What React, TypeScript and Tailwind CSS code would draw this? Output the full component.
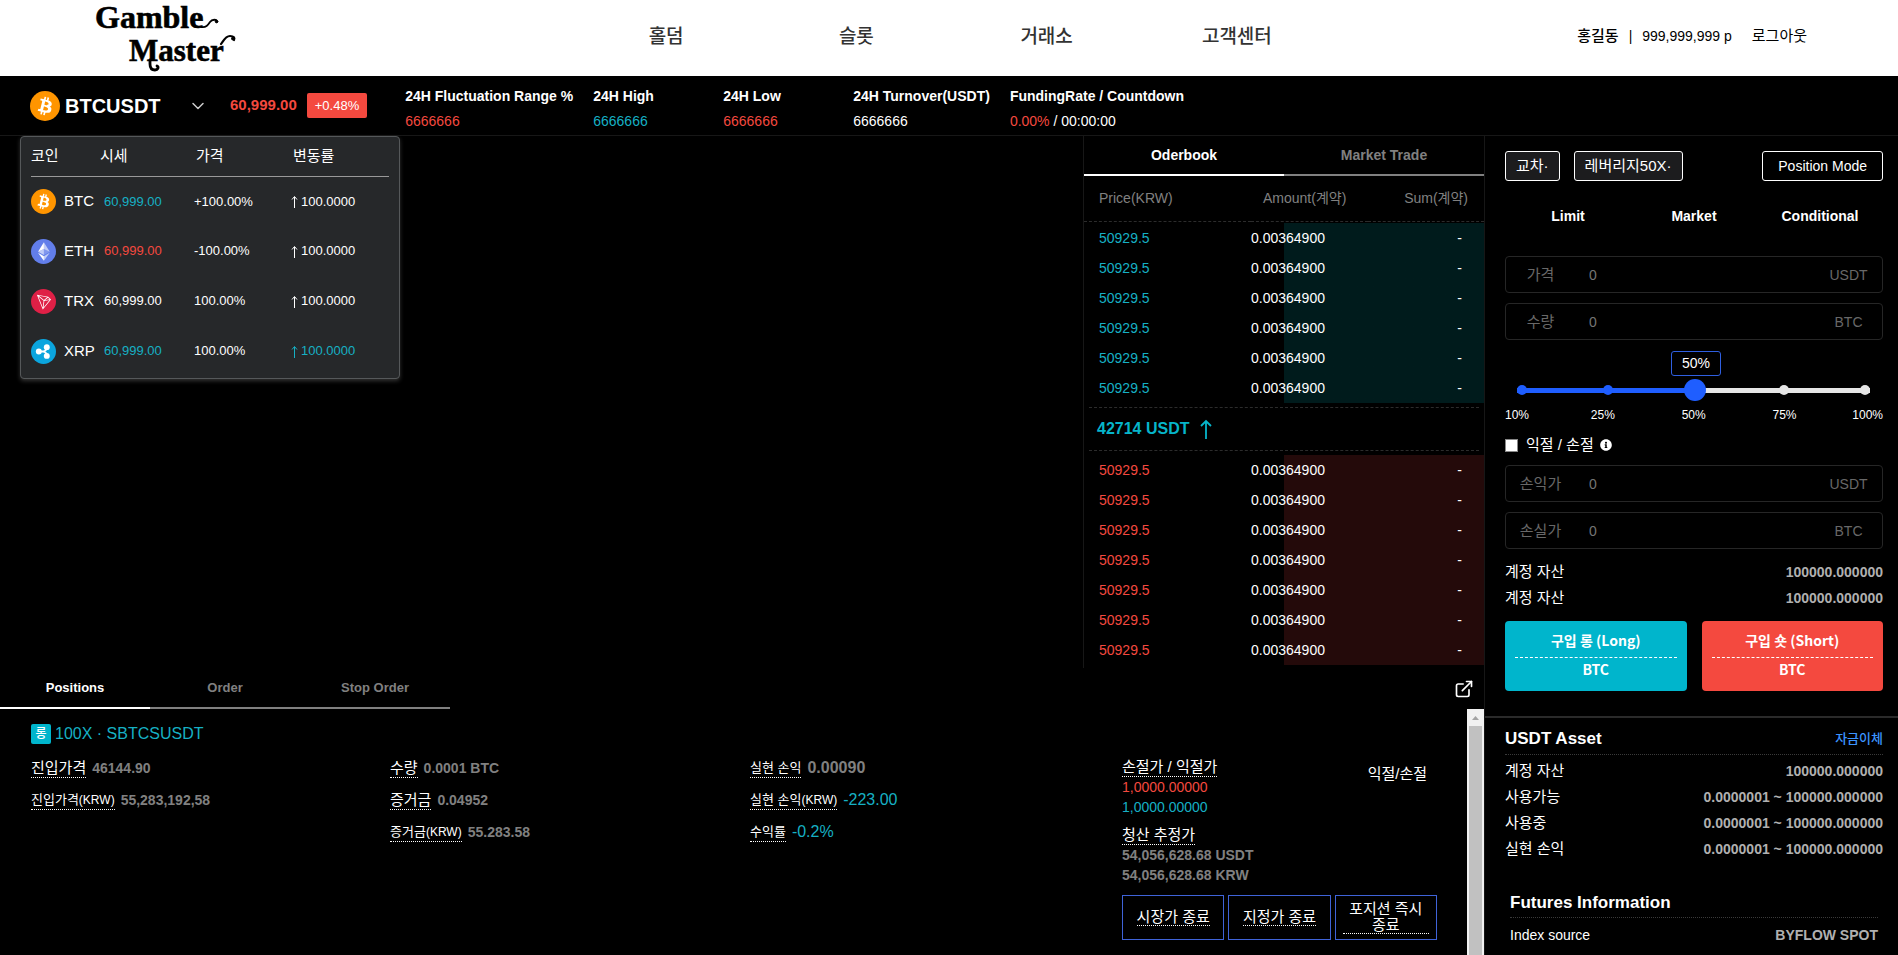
import { useState } from "react";
import type { ReactNode } from "react";
import { ChevronDown, ExternalLink } from "lucide-react";
import { FaInfoCircle } from "react-icons/fa";

type Tone = "up" | "down" | "plain";

const toneClass: Record<Tone, string> = {
  up: "text-[#16b0c4]",
  down: "text-[#f4493f]",
  plain: "text-white",
};

function BtcIcon({ className }: { className: string }) {
  return (
    <svg viewBox="0 0 32 32" className={className} aria-hidden="true">
      <circle cx="16" cy="16" r="16" fill="#ff9500" />
      <path
        fill="#fff"
        d="M23.189 14.02c.314-2.096-1.283-3.223-3.465-3.975l.708-2.84-1.728-.43-.69 2.765c-.454-.114-.92-.22-1.385-.326l.695-2.783L15.596 6l-.708 2.839c-.376-.086-.746-.17-1.104-.26l.002-.009-2.384-.595-.46 1.846s1.283.294 1.256.312c.7.175.826.638.805 1.006l-.806 3.235c.048.012.11.03.18.057l-.183-.045-1.13 4.532c-.086.212-.303.531-.793.41.018.025-1.256-.313-1.256-.313l-.858 1.978 2.25.561c.418.105.828.215 1.231.318l-.715 2.872 1.727.43.708-2.84c.472.127.93.245 1.378.357l-.706 2.828 1.728.43.715-2.866c2.948.558 5.164.333 6.097-2.333.752-2.146-.037-3.385-1.588-4.192 1.13-.26 1.98-1.003 2.207-2.538zm-3.95 5.538c-.533 2.147-4.148.986-5.32.695l.95-3.805c1.172.293 4.929.872 4.37 3.11zm.535-5.569c-.487 1.953-3.495.96-4.47.717l.86-3.45c.975.243 4.118.696 3.61 2.733z"
      />
    </svg>
  );
}

function EthIcon({ className }: { className: string }) {
  return (
    <svg viewBox="0 0 32 32" className={className} aria-hidden="true">
      <circle cx="16" cy="16" r="16" fill="#627eea" />
      <g fill="#fff">
        <path fillOpacity=".6" d="M16.498 4v8.87l7.497 3.35z" />
        <path d="M16.498 4L9 16.22l7.498-3.35z" />
        <path fillOpacity=".6" d="M16.498 21.968v6.027L24 17.616z" />
        <path d="M16.498 27.995v-6.028L9 17.616z" />
        <path fillOpacity=".2" d="M16.498 20.573l7.497-4.353-7.497-3.348z" />
        <path fillOpacity=".6" d="M9 16.22l7.498 4.353v-7.701z" />
      </g>
    </svg>
  );
}

function TrxIcon({ className }: { className: string }) {
  return (
    <svg viewBox="0 0 32 32" className={className} aria-hidden="true">
      <circle cx="16" cy="16" r="16" fill="#df2046" />
      <path
        fill="#fff"
        d="M21.932 9.913L7.5 7.257l7.595 19.112 10.583-12.894-3.746-3.562zm-.232 1.17l2.208 2.099-6.038 1.093 3.83-3.192zm-5.142 2.973l-6.364-5.278 10.402 1.914-4.038 3.364zm-.453.934l-1.038 8.58L9.472 9.487l6.633 5.502zm.96.455l6.687-1.21-7.67 9.343.983-8.133z"
      />
    </svg>
  );
}

function XrpIcon({ className }: { className: string }) {
  return (
    <svg viewBox="0 0 32 32" className={className} aria-hidden="true">
      <circle cx="16" cy="16" r="16" fill="#0ba5de" />
      <g fill="#fff">
        <circle cx="10" cy="16" r="3.8" />
        <circle cx="20.2" cy="10.4" r="3.8" />
        <circle cx="20.2" cy="21.6" r="3.8" />
      </g>
      <path
        d="M10 16h5.4c2.4 0 4.6-2.4 4.6-5.4M15.4 16c2.4 0 4.6 2.4 4.6 5.4"
        fill="none"
        stroke="#fff"
        strokeWidth="2.6"
      />
    </svg>
  );
}

function Logo() {
  return (
    <svg viewBox="0 0 150 76" className="h-[76px] w-[150px]" role="img" aria-label="Gamble Master">
      <g fill="#000" stroke="#000" strokeWidth="0.6" className="font-['Liberation_Serif',serif] font-bold">
        <text x="4" y="28" fontSize="32">
          Gamble
        </text>
        <text x="38" y="61" fontSize="31">
          Master
        </text>
      </g>
      <g fill="none" stroke="#000" strokeLinecap="round">
        <path d="M110 27c5 1 7-2 9-5 2-3 7-3 7 0" strokeWidth="1.8" />
        <circle cx="125.500" cy="21.500" r="1.300" fill="#000" />
        <path d="M59 60v4c0 4 2 6 5 6s4-3 2-4" strokeWidth="2.800" />
        <path d="M130 44c2-2 4-8 9-8 4 0 5 2 4 4" strokeWidth="2.200" />
        <circle cx="142" cy="38.500" r="1.500" fill="#000" />
      </g>
    </svg>
  );
}

function SiteHeader() {
  return (
    <header className="grid grid-cols-[571fr_761fr_566fr] items-center bg-white text-black">
      <a href="#home" className="pl-[91px]">
        <Logo />
      </a>
      <nav className="grid grid-cols-4 text-center text-[19px] font-medium text-[#333]">
        {["홀덤", "슬롯", "거래소", "고객센터"].map((item) => (
          <a key={item} href="#menu" className="pb-0.5">
            {item}
          </a>
        ))}
      </nav>
      <div className="flex items-center justify-end gap-5 pr-[91px] pb-1 text-sm">
        <div className="flex items-center gap-2.5">
          <span className="text-[15px] font-medium">홍길동</span>
          <span>|</span>
          <span>999,999,999 p</span>
        </div>
        <a href="#logout" className="text-[15px]">
          로그아웃
        </a>
      </div>
    </header>
  );
}

const coins: {
  name: string;
  icon: typeof BtcIcon;
  price: string;
  priceTone: Tone;
  change: string;
  rateTone: Tone;
}[] = [
  { name: "BTC", icon: BtcIcon, price: "60,999.00", priceTone: "up", change: "+100.00%", rateTone: "plain" },
  { name: "ETH", icon: EthIcon, price: "60,999.00", priceTone: "down", change: "-100.00%", rateTone: "plain" },
  { name: "TRX", icon: TrxIcon, price: "60,999.00", priceTone: "plain", change: "100.00%", rateTone: "plain" },
  { name: "XRP", icon: XrpIcon, price: "60,999.00", priceTone: "up", change: "100.00%", rateTone: "up" },
];

function CoinMenu() {
  return (
    <div className="absolute top-full left-5 z-10 mt-px w-[380px] rounded border border-[#55585a] bg-[#26282a] px-[10px] pb-0.5 shadow-[0_2px_4px_#333]">
      <table className="w-full table-fixed text-left text-[13px]">
        <colgroup>
          <col className="w-[69px]" />
          <col className="w-[94px]" />
          <col className="w-[97px]" />
          <col />
        </colgroup>
        <thead>
          <tr className="h-[39px] border-b border-[#999] text-[15px]">
            <th className="font-normal">코인</th>
            <th className="font-normal">시세</th>
            <th className="pl-0.5 font-normal">가격</th>
            <th className="pl-0.5 font-normal">변동률</th>
          </tr>
        </thead>
        <tbody>
          {coins.map(({ name, icon: Icon, price, priceTone, change, rateTone }) => (
            <tr key={name} className="h-[50px]">
              <td>
                <span className="flex items-center gap-2 text-[15px]">
                  <Icon className="size-[25px]" />
                  {name}
                </span>
              </td>
              <td className={`pl-1 ${toneClass[priceTone]}`}>{price}</td>
              <td>{change}</td>
              <td className={toneClass[rateTone]}>
                <span className="flex items-center gap-[3px]">
                  <svg viewBox="0 0 7 13" className="h-[13px] w-[7px]" fill="none" stroke="currentColor" aria-hidden="true">
                    <path d="M3.5 13V2M1 4.5L3.5 1.500L6 4.500" />
                  </svg>
                  100.0000
                </span>
              </td>
            </tr>
          ))}
        </tbody>
      </table>
    </div>
  );
}

function Stat({ label, children, tone }: { label: string; children: ReactNode; tone: Tone }) {
  return (
    <div className="min-w-[110px]">
      <dt className="font-bold">{label}</dt>
      <dd className={toneClass[tone]}>{children}</dd>
    </div>
  );
}

function TickerBar() {
  return (
    <section className="relative flex h-[60px] items-center border-b border-[#171717] pl-[30px]">
      <button type="button" className="flex w-[174px] items-center justify-between">
        <span className="flex items-center gap-[5px]">
          <BtcIcon className="size-[30px]" />
          <span className="text-xl font-bold">BTCUSDT</span>
        </span>
        <ChevronDown className="-mr-1 size-5 text-[#ccc]" strokeWidth={1.8} />
      </button>
      <span className="ml-[26px] text-[15px] font-bold text-[#f4493f]">60,999.00</span>
      <span className="ml-2.5 rounded-xs bg-[#f4493f] px-2 text-[13px] leading-[25px]">+0.48%</span>
      <dl className="ml-[38px] flex gap-5 pt-1.5 text-sm leading-[25px]">
        <Stat label="24H Fluctuation Range %" tone="down">
          6666666
        </Stat>
        <Stat label="24H High" tone="up">
          6666666
        </Stat>
        <Stat label="24H Low" tone="down">
          6666666
        </Stat>
        <Stat label="24H Turnover(USDT)" tone="plain">
          6666666
        </Stat>
        <Stat label="FundingRate / Countdown" tone="plain">
          <span className="text-[#f4493f]">0.00%</span> / 00:00:00
        </Stat>
      </dl>
      <CoinMenu />
    </section>
  );
}

function OrderRows({ count, tone }: { count: number; tone: "up" | "down" }) {
  const shade = tone === "up" ? "to-[#001b1c]" : "to-[#240a0a]";
  return (
    <>
      {Array.from({ length: count }, (_, i) => (
        <tr key={i} className={`h-[30px] bg-linear-to-r from-transparent from-50% to-50% ${shade}`}>
          <td className={`pl-[15px] ${toneClass[tone]}`}>50929.5</td>
          <td>0.00364900</td>
          <td className="pr-[22px] text-right">-</td>
        </tr>
      ))}
    </>
  );
}

function OrderBook() {
  return (
    <section className="w-[402px] border-x border-[#171717] pb-[3px]">
      <div className="grid grid-cols-2 text-sm font-bold">
        <button type="button" className="h-10 border-b-2 border-white">
          Oderbook
        </button>
        <button type="button" className="h-10 border-b-2 border-[#808080] text-[#808080]">
          Market Trade
        </button>
      </div>
      <table className="w-full table-fixed text-left text-sm">
        <colgroup>
          <col className="w-[167px]" />
          <col />
          <col className="w-[116px]" />
        </colgroup>
        <thead>
          <tr className="h-[45px] border-b border-dashed border-[#2c2c2c] text-[#808080]">
            <th className="pl-[15px] font-normal">Price(KRW)</th>
            <th className="pl-3 font-normal">Amount(계약)</th>
            <th className="pr-4 text-right font-normal">Sum(계약)</th>
          </tr>
        </thead>
        <tbody>
          <tr className="h-0.5">
            <td colSpan={3} />
          </tr>
          <OrderRows count={6} tone="up" />
          <tr>
            <td colSpan={3} className="px-[5px] py-1">
              <div className="flex h-11 items-center gap-2.5 border-y border-dashed border-[#2c2c2c] px-2 text-base font-bold text-[#06b5ca]">
                42714 USDT
                <svg viewBox="0 0 12 20" className="h-5 w-3" fill="none" stroke="currentColor" strokeWidth="1.800" aria-hidden="true">
                  <path d="M6 20V2M1 7l5-5 5 5" />
                </svg>
              </div>
            </td>
          </tr>
          <OrderRows count={7} tone="down" />
        </tbody>
      </table>
    </section>
  );
}

function Dotted({ children, small = false }: { children: ReactNode; small?: boolean }) {
  return (
    <span className={`border-b border-dotted border-white leading-[19px] ${small ? "text-[13px]" : "text-[15px]"}`}>
      {children}
    </span>
  );
}

function Field({
  label,
  currency,
  value,
  small = false,
  valueClass = "text-sm font-bold text-[#808080]",
}: {
  label: string;
  currency?: string;
  value: string;
  small?: boolean;
  valueClass?: string;
}) {
  return (
    <div className="flex h-8 items-center gap-1.5">
      <Dotted small={small}>
        {label}
        {currency && <span className="text-xs">({currency})</span>}
      </Dotted>
      <span className={valueClass}>{value}</span>
    </div>
  );
}

function Positions() {
  return (
    <section className="flex flex-1 flex-col">
      <div className="flex items-center justify-between pr-2.5">
        <div className="flex text-[13px] font-bold text-[#808080]">
          <button type="button" className="h-[41px] w-[150px] border-b-2 border-white text-white">
            Positions
          </button>
          <button type="button" className="h-[41px] w-[150px] border-b-2 border-[#808080]">
            Order
          </button>
          <button type="button" className="h-[41px] w-[150px] border-b-2 border-[#808080]">
            Stop Order
          </button>
        </div>
        <button type="button" aria-label="Open in new window">
          <ExternalLink className="size-5" strokeWidth={2} />
        </button>
      </div>
      <div className="flex flex-1">
        <div className="min-w-0 flex-1 pt-[15px] pl-[31px]">
          <h2 className="flex h-5 items-center gap-1 text-base text-[#16b0c4]">
            <span className="flex size-5 items-center justify-center rounded-xs bg-[#00b5cc] text-xs font-medium text-white">
              롱
            </span>
            100X · SBTCSUSDT
          </h2>
          <div className="grid grid-cols-4 pt-2">
            <div>
              <Field label="진입가격" value="46144.90" />
              <Field label="진입가격" currency="KRW" value="55,283,192,58" small />
            </div>
            <div>
              <Field label="수량" value="0.0001 BTC" />
              <Field label="증거금" value="0.04952" />
              <Field label="증거금" currency="KRW" value="55.283.58" small />
            </div>
            <div className="pl-px">
              <Field label="실현 손익" value="0.00090" small valueClass="text-base font-bold text-[#808080]" />
              <Field label="실현 손익" currency="KRW" value="-223.00" small valueClass="text-base text-[#16b0c4]" />
              <Field label="수익률" value="-0.2%" small valueClass="text-base text-[#16b0c4]" />
            </div>
            <div className="pt-[5px] pr-[30px] pl-[14px] text-sm leading-5">
              <div className="flex items-start justify-between">
                <div>
                  <div className="flex">
                    <Dotted>손절가 / 익절가</Dotted>
                  </div>
                  <p className="text-[#f4493f]">1,0000.00000</p>
                  <p className="text-[#16b0c4]">1,0000.00000</p>
                </div>
                <button type="button" className="pt-[7px] pr-2.5 text-[15px]">
                  익절/손절
                </button>
              </div>
              <div className="flex pt-2">
                <Dotted>청산 추정가</Dotted>
              </div>
              <p className="font-bold text-[#808080]">54,056,628.68 USDT</p>
              <p className="font-bold text-[#808080]">54,056,628.68 KRW</p>
              <div className="mt-2.5 grid grid-cols-3 gap-1 text-[15px] leading-4">
                {["시장가 종료", "지정가 종료", "포지션 즉시 종료"].map((label) => (
                  <button key={label} type="button" className="flex h-[45px] items-center justify-center border border-[#3f63d8] px-[7px]">
                    <span className="border-b border-dotted border-white">{label}</span>
                  </button>
                ))}
              </div>
            </div>
          </div>
        </div>
        <div className="flex w-[17px] flex-col bg-[#f1f1f1]" aria-hidden="true">
          <svg viewBox="0 0 17 17" className="size-[17px]">
            <path d="M5 11l3.500-4 3.500 4z" fill="#a3a3a3" />
          </svg>
          <div className="mx-0.5 flex-1 bg-[#c1c1c1]" />
        </div>
      </div>
    </section>
  );
}

function AmountInput({ id, label, unit }: { id: string; label: string; unit: string }) {
  return (
    <div className="flex h-[37px] items-center rounded border border-[#262626] text-sm text-[#686868]">
      <label htmlFor={id} className="w-[69px] shrink-0 text-center text-[15px]">
        {label}
      </label>
      <input
        id={id}
        type="text"
        placeholder="0"
        className="min-w-0 flex-1 bg-transparent pl-[14px] outline-none placeholder:text-[#757575]"
      />
      <span className="w-[67px] shrink-0 text-center">{unit}</span>
    </div>
  );
}

function LeverageSlider() {
  const [value, setValue] = useState(50);
  return (
    <div className="pt-px">
      <div className="flex justify-center pl-1">
        <output htmlFor="leverage" className="w-[50px] rounded-[3px] border border-[#2f5fe0] text-center text-sm leading-[23px]">
          {value}%
        </output>
      </div>
      <div className="relative mt-[3px] mr-[13px] ml-3 flex h-[22px] items-center">
        <div className="flex h-[5px] w-full bg-[#e6e6e6]">
          <div className="bg-[#1f5eff]" style={{ width: `${value}%` }} />
        </div>
        <span className="absolute left-0 size-2.5 rounded-full bg-[#1f5eff]" />
        <span className="absolute left-[24.5%] size-2.5 rounded-full bg-[#1f5eff]" />
        <span className="absolute left-[50.5%] size-[22px] -translate-x-1/2 rounded-full bg-[#1f5eff]" />
        <span className="absolute right-[23%] size-2.5 rounded-full bg-[#e6e6e6]" />
        <span className="absolute right-0 size-2.5 rounded-full bg-[#e6e6e6]" />
        <input
          id="leverage"
          type="range"
          aria-label="Leverage"
          min={0}
          max={100}
          value={value}
          onChange={(e) => setValue(Number(e.target.value))}
          className="absolute inset-0 w-full cursor-pointer opacity-0"
        />
      </div>
      <div className="grid grid-cols-[86fr_91fr_91fr_80fr_30fr] pt-1 text-xs leading-[20px]">
        {["10%", "25%", "50%", "75%", "100%"].map((mark) => (
          <span key={mark}>{mark}</span>
        ))}
      </div>
    </div>
  );
}

function InfoRow({ label, value }: { label: string; value: string }) {
  return (
    <div className="flex h-[26px] items-center justify-between">
      <dt className="text-[15px]">{label}</dt>
      <dd className="text-sm font-bold text-[#b0b0b0]">{value}</dd>
    </div>
  );
}

function TradeButton({ label, className }: { label: string; className: string }) {
  return (
    <button
      type="button"
      className={`h-[70px] rounded px-2.5 font-['Noto_Sans_CJK_KR',sans-serif] text-sm font-bold ${className}`}
    >
      <span className="block border-b border-dashed border-white pb-1.5 leading-[22px]">{label}</span>
      <span className="block pb-1 leading-[22px]">BTC</span>
    </button>
  );
}

function OrderPanel() {
  return (
    <aside className="w-[413px]">
      <div className="border-b-2 border-[#2a2a2a] px-[15px] pt-[15px] pb-[25px] pl-5">
        <div className="flex text-sm leading-7">
          <button type="button" className="rounded-[3px] border border-white bg-[#1c1c1e] px-2.5 text-[15px]">
            교차·
          </button>
          <button type="button" className="ml-[14px] rounded-[3px] border border-white bg-[#1c1c1e] px-2.5 text-[15px]">
            레버리지50X·
          </button>
          <button type="button" className="ml-auto rounded-[3px] border border-white px-[15px]">
            Position Mode
          </button>
        </div>
        <div className="mt-5 mb-[25px] grid h-[30px] grid-cols-3 text-sm font-bold">
          <button type="button">Limit</button>
          <button type="button">Market</button>
          <button type="button">Conditional</button>
        </div>
        <div className="flex flex-col gap-2.5">
          <AmountInput id="price" label="가격" unit="USDT" />
          <AmountInput id="quantity" label="수량" unit="BTC" />
          <LeverageSlider />
        </div>
        <div className="flex h-10 items-center gap-2 text-[15px]">
          <input id="tpsl" type="checkbox" className="size-[13px] appearance-none border border-[#888] bg-white checked:bg-[#1f5eff]" />
          <label htmlFor="tpsl">익절 / 손절</label>
          <FaInfoCircle className="-ml-0.5 size-3" aria-hidden="true" />
        </div>
        <div className="flex flex-col gap-2.5">
          <AmountInput id="take-profit" label="손익가" unit="USDT" />
          <AmountInput id="stop-loss" label="손실가" unit="BTC" />
        </div>
        <dl className="py-2.5">
          <InfoRow label="계정 자산" value="100000.000000" />
          <InfoRow label="계정 자산" value="100000.000000" />
        </dl>
        <div className="grid grid-cols-2 gap-[15px]">
          <TradeButton label="구입 롱 (Long)" className="bg-[#00b5cc]" />
          <TradeButton label="구입 숏 (Short)" className="bg-[#f4493f]" />
        </div>
      </div>
      <section className="pt-[5px] pr-[15px] pl-5">
        <div className="flex h-8 items-center justify-between border-b border-dotted border-[#3a3a3a]">
          <h2 className="text-[17px] font-bold">USDT Asset</h2>
          <a href="#transfer" className="text-[13px] font-medium text-[#3b94ff]">
            자금이체
          </a>
        </div>
        <dl className="pt-[3px]">
          <InfoRow label="계정 자산" value="100000.000000" />
          <InfoRow label="사용가능" value="0.0000001 ~ 100000.000000" />
          <InfoRow label="사용중" value="0.0000001 ~ 100000.000000" />
          <InfoRow label="실현 손익" value="0.0000001 ~ 100000.000000" />
        </dl>
      </section>
      <section className="pt-[25px] pr-5 pl-[25px]">
        <h2 className="h-[31px] border-b border-dotted border-[#3a3a3a] text-[17px] leading-[31px] font-bold">
          Futures Information
        </h2>
        <dl className="flex h-[34px] items-center justify-between text-sm">
          <dt>Index source</dt>
          <dd className="font-bold text-[#b0b0b0]">BYFLOW SPOT</dd>
        </dl>
      </section>
    </aside>
  );
}

export default function App() {
  return (
    <div className="flex min-h-screen flex-col bg-black font-['Liberation_Sans','Noto_Sans_CJK_KR',sans-serif] text-white">
      <SiteHeader />
      <TickerBar />
      <main className="flex flex-1">
        <div className="flex min-w-0 flex-1 flex-col border-r border-[#171717]">
          <div className="flex">
            <div className="flex-1" />
            <div className="-mr-px">
              <OrderBook />
            </div>
          </div>
          <Positions />
        </div>
        <OrderPanel />
      </main>
    </div>
  );
}
